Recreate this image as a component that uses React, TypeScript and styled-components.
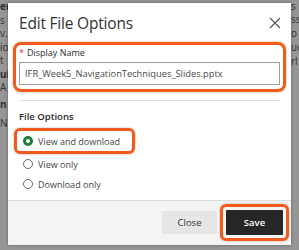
import React from "react";
import styled, { createGlobalStyle } from "styled-components";

const GlobalStyle = createGlobalStyle`
  html, body { margin: 0; padding: 0; }
  body { background: #959595; font-family: "Open Sans", "Noto Sans", sans-serif; }
  * { box-sizing: border-box; }
`;

const Page = styled.div`
  width: 299px;
  height: 250px;
  display: flex;
  overflow: hidden;
  background: #969696;
`;

const Strip = styled.div<{ $w: number; $offset: number; $lh: number }>`
  width: ${(p) => p.$w}px;
  flex: none;
  overflow: hidden;
  padding-top: ${(p) => p.$offset}px;
  font-family: "Open Sans", sans-serif;
  font-size: 10px;
  line-height: ${(p) => p.$lh}px;
  color: #303030;
  white-space: nowrap;
`;

const StripLine = styled.div<{ $bold?: boolean }>`
  font-weight: ${(p) => (p.$bold ? 700 : 400)};
  min-height: 1px;
`;

const Center = styled.div`
  width: 283px;
  flex: none;
  display: flex;
  flex-direction: column;
`;

const TopStrip = styled.div`
  height: 3px;
  flex: none;
`;

const Dialog = styled.div`
  height: 242px;
  flex: none;
  background: #fff;
  display: flex;
  flex-direction: column;
  box-shadow: 0 0 3px rgba(0, 0, 0, 0.35);
`;

const Header = styled.div`
  height: 39px;
  flex: none;
  display: flex;
  align-items: center;
  justify-content: space-between;
  padding: 1px 8px 0 11px;
`;

const Title = styled.h1`
  margin: 0;
  font-size: 15.5px;
  font-weight: 400;
  color: #333;
  letter-spacing: -0.2px;
`;

const CloseX = styled.button`
  width: 14px;
  height: 14px;
  padding: 0;
  border: 0;
  background: none;
  display: flex;
  align-items: center;
  justify-content: center;
  margin-right: 1px;
`;

const Body = styled.div`
  flex: 1;
  padding: 0 11px;
  display: flex;
  flex-direction: column;
`;

const Highlight = styled.div<{ $mx: number; $pad: string; $radius: number }>`
  border: 3px solid #f05a1c;
  border-radius: ${(p) => p.$radius}px;
  margin: 0 ${(p) => -p.$mx}px;
  padding: ${(p) => p.$pad};
  box-shadow: 0 0 2px rgba(120, 40, 0, 0.45);
`;

const Label = styled.label`
  display: block;
  font-size: 9px;
  line-height: 14px;
  color: #2b2b2b;
  margin-bottom: 2px;
`;

const Req = styled.span`
  color: #d32f2f;
  margin-right: 3px;
`;

const TextInput = styled.div`
  height: 23px;
  border: 1px solid #9e9e9e;
  display: flex;
  align-items: center;
  padding: 0 5px;
  font-size: 9.3px;
  color: #4a4a4a;
  white-space: nowrap;
  overflow: hidden;
`;

const Divider = styled.hr`
  border: 0;
  border-top: 1px solid #dedede;
  margin: 8px 0 0;
`;

const GroupLabel = styled.div`
  font-size: 9.5px;
  font-weight: 600;
  color: #2b2b2b;
  line-height: 14px;
  margin-top: 9px;
  margin-bottom: 4px;
`;

const RadioWrap = styled.div`
  align-self: flex-start;
`;

const RadioRow = styled.div`
  height: 20px;
  display: flex;
  align-items: center;
  gap: 5px;
  font-size: 9px;
  color: #444;
`;

const RadioCircle = styled.span<{ $checked?: boolean }>`
  width: 10px;
  height: 10px;
  border-radius: 50%;
  flex: none;
  border: ${(p) => (p.$checked ? "3px solid #1c7a3a" : "1px solid #6a6a6a")};
  background: #fff;
  margin-left: 4px;
`;

const Footer = styled.div`
  height: 45px;
  flex: none;
  border-top: 1px solid #dcdcdc;
  background: #f4f4f4;
  display: flex;
  align-items: center;
  justify-content: flex-end;
  gap: 3px;
  padding: 0 2px 1px 0;
`;

const Button = styled.button<{ $primary?: boolean }>`
  height: ${(p) => (p.$primary ? 25 : 23)}px;
  width: ${(p) => (p.$primary ? 57 : 55)}px;
  border: 0;
  border-radius: 1px;
  font-family: "Open Sans", sans-serif;
  font-size: 9.5px;
  font-weight: ${(p) => (p.$primary ? 600 : 400)};
  background: ${(p) => (p.$primary ? "#262626" : "#e6e6e6")};
  color: ${(p) => (p.$primary ? "#fff" : "#333")};
  padding: 0;
  display: block;
`;

const BottomStrip = styled.div`
  flex: 1;
`;

const leftLines: { t: string; b?: boolean }[] = [
  { t: "er", b: true },
  { t: "s" },
  { t: "v." },
  { t: "io" },
  { t: "t" },
  { t: "ui", b: true },
  { t: "A p" },
  { t: "" },
  { t: "" },
  { t: "" },
  { t: "n", b: true },
  { t: "" },
  { t: "" },
  { t: "" },
  { t: "" },
  { t: "" },
  { t: "" },
  { t: "Na" },
];

const rightLines: { t: string; b?: boolean }[] = [
  { t: "s" },
  { t: "ss" },
  { t: "" },
  { t: "o" },
  { t: "" },
  { t: "ue" },
  { t: "" },
  { t: "rl" },
];

export default function App() {
  return (
    <>
      <GlobalStyle />
      <Page>
        <Strip $w={8} $offset={-6} $lh={13.5}>
          {leftLines.map((l, i) => (
            <StripLine key={i} $bold={l.b}>{l.t}</StripLine>
          ))}
        </Strip>
        <Center>
          <TopStrip />
          <Dialog>
            <Header>
              <Title>Edit File Options</Title>
              <CloseX aria-label="Close">
                <svg width="12" height="12" viewBox="0 0 12 12">
                  <path d="M1 1 L11 11 M11 1 L1 11" stroke="#555" strokeWidth="1.2" fill="none" />
                </svg>
              </CloseX>
            </Header>
            <Body>
              <Highlight $mx={6} $pad="1px 3px 4px" $radius={8}>
                <Label>
                  <Req>*</Req>Display Name
                </Label>
                <TextInput>IFR_Week5_NavigationTechniques_Slides.pptx</TextInput>
              </Highlight>
              <Divider />
              <GroupLabel>File Options</GroupLabel>
              <RadioWrap>
                <Highlight $mx={5} $pad="0 12px 0 2px" $radius={6}>
                  <RadioRow>
                    <RadioCircle $checked />
                    View and download
                  </RadioRow>
                </Highlight>
              </RadioWrap>
              <RadioRow>
                <RadioCircle />
                View only
              </RadioRow>
              <RadioRow>
                <RadioCircle />
                Download only
              </RadioRow>
            </Body>
            <Footer>
              <Button>Close</Button>
              <Highlight $mx={0} $pad="3px" $radius={6}>
                <Button $primary>Save</Button>
              </Highlight>
            </Footer>
          </Dialog>
          <BottomStrip />
        </Center>
        <Strip $w={8} $offset={-1.5} $lh={13}>
          {rightLines.map((l, i) => (
            <StripLine key={i} $bold={l.b}>{l.t}</StripLine>
          ))}
        </Strip>
      </Page>
    </>
  );
}
